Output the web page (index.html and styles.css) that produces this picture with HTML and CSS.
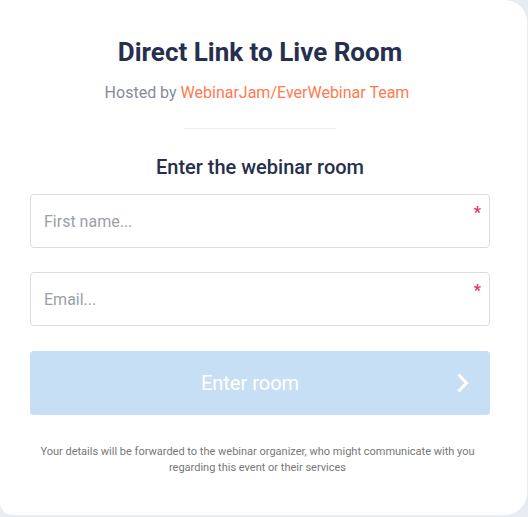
FILE: index.html
```html
<!DOCTYPE html>
<html lang="en">
<head>
  <meta charset="UTF-8" />
  <title>Direct Link to Live Room</title>
  <link rel="stylesheet" href="styles.css">
</head>
<body>
  <div class="card">
    <h1>Direct Link to Live Room</h1>
    <p class="host">Hosted by <span class="host-name">WebinarJam/EverWebinar Team</span></p>
    <hr class="divider">
    <h2>Enter the webinar room</h2>

    <form class="room-form">
      <div class="field">
        <input type="text" placeholder="First name..." />
        <span class="req">*</span>
      </div>
      <div class="field">
        <input type="email" placeholder="Email..." />
        <span class="req">*</span>
      </div>
      <button type="button" class="enter-btn">
        Enter room
        <svg class="chevron" width="12" height="20" viewBox="0 0 12 20">
          <path d="M2.5 2.5 L9.5 10 L2.5 17.5" fill="none" stroke="#fff" stroke-width="3" stroke-linecap="square" />
        </svg>
      </button>
    </form>

    <p class="note">Your details will be forwarded to the webinar organizer, who might communicate with you regarding this event or their services</p>
  </div>
</body>
</html>
```

FILE: styles.css
```css
body {
  margin: 0;
  background-color: #e9ebf2;
  font-family: Roboto, "Liberation Sans", sans-serif;
}

.card {
  width: 460px;
  height: 479px;
  padding: 36px 37px 0 30px;
  background-color: #fff;
  border-radius: 0 22px 22px 12px;
}

h1 {
  margin: 0;
  text-align: center;
  font-size: 26px;
  font-weight: 700;
  line-height: 32px;
  color: #262f4d;
}

.host {
  margin: 15px 0 0;
  padding-right: 6px;
  text-align: center;
  font-size: 16px;
  line-height: 20px;
  color: #868b9c;
}

.host-name {
  color: #ff7a4f;
}

.divider {
  width: 152px;
  margin: 25px auto 0;
  border: none;
  border-top: 1px solid #eceef1;
}

h2 {
  margin: 26px 0 0;
  text-align: center;
  font-size: 20px;
  font-weight: 500;
  line-height: 24px;
  color: #262f4d;
}

.room-form {
  display: flex;
  flex-direction: column;
  gap: 24px;
  margin-top: 15px;
}

.field {
  position: relative;
}

.field input {
  box-sizing: border-box;
  width: 100%;
  height: 54px;
  padding: 0 13px;
  border: 1px solid #dcdddf;
  border-radius: 4px;
  font-family: inherit;
  font-size: 16px;
  color: #262f4d;
  outline: none;
}

.field input::placeholder {
  color: #9aa0a8;
}

.req {
  position: absolute;
  top: 9px;
  right: 9px;
  font-size: 16px;
  font-weight: 700;
  color: #e8365d;
}

.enter-btn {
  position: relative;
  height: 64px;
  margin-top: 1px;
  padding: 0 20px 0 0;
  border: none;
  border-radius: 4px;
  background-color: #c7dff5;
  color: #fff;
  font-family: inherit;
  font-size: 20px;
  cursor: pointer;
}

.chevron {
  position: absolute;
  top: 22px;
  right: 21px;
}

.note {
  margin: 29px 0 0;
  padding-right: 5px;
  text-align: center;
  font-size: 11px;
  line-height: 16px;
  color: #777;
}
```
